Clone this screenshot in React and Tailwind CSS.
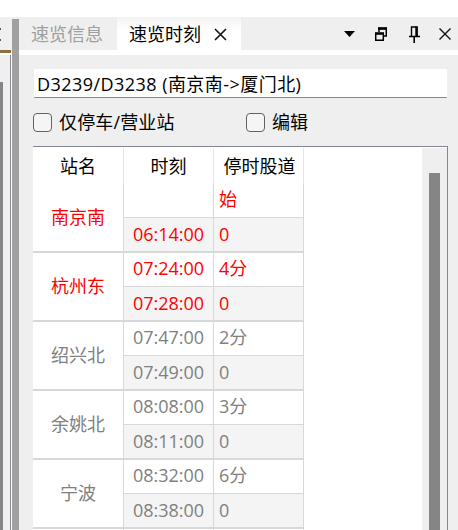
const stops = [
  { name: '南京南', arrive: '', stay: '始', depart: '06:14:00', major: true },
  { name: '杭州东', arrive: '07:24:00', stay: '4分', depart: '07:28:00', major: true },
  { name: '绍兴北', arrive: '07:47:00', stay: '2分', depart: '07:49:00' },
  { name: '余姚北', arrive: '08:08:00', stay: '3分', depart: '08:11:00' },
  { name: '宁波', arrive: '08:32:00', stay: '6分', depart: '08:38:00' },
];

function TabBar() {
  return (
    <div className="flex h-[33px] w-full bg-[#efefef]">
      <div className="flex h-[33px] w-[98px] items-center pl-3 text-[#a0a0a0]">速览信息</div>
      <div className="flex h-[33px] w-[124px] items-center bg-linear-to-b from-[#f3f3f3] to-white to-40% pl-3">
        <span>速览时刻</span>
        <svg className="mt-0.5 ml-[13px]" width="13" height="13" viewBox="0 0 13 13" fill="none" stroke="#111" strokeWidth="1.6">
          <path d="M1 1 12 12M12 1 1 12" />
        </svg>
      </div>
      <div className="ml-auto flex items-center pr-[7px]">
        <svg width="11" height="6" viewBox="0 0 11 6"><path d="M0 0H11L5.5 6Z" /></svg>
        <svg className="ml-5" width="12" height="14" viewBox="0 0 12 14" fill="none" stroke="#000">
          <path d="M4 5V1.5H11.3V9H9" strokeWidth="1.5" />
          <path d="M3 1.5H12" strokeWidth="2.6" />
          <path d="M.7 6V13.2H8.3V6" strokeWidth="1.5" />
          <path d="M0 6.5H9" strokeWidth="2.6" />
        </svg>
        <svg className="mt-0.5 ml-[22px]" width="11" height="17" viewBox="0 0 11 17" fill="none" stroke="#000">
          <path d="M2.5 10V1H8V10" strokeWidth="1.4" />
          <path d="M7.5 .5V10" strokeWidth="2.4" />
          <path d="M0 10.5H11M5.2 11V17" strokeWidth="1.6" />
        </svg>
        <svg className="ml-[19px]" width="12" height="12" viewBox="0 0 12 12" fill="none" stroke="#111" strokeWidth="1.4">
          <path d="M.5 .5 11.5 11.5M11.5 .5 .5 11.5" />
        </svg>
      </div>
    </div>
  );
}

function Check({ label, className }) {
  return (
    <label className={'flex items-center gap-[7px] ' + className}>
      <span className="size-[19px] rounded-[4px] border border-[#626262] bg-[#f5f5f5]" />
      <span>{label}</span>
    </label>
  );
}

function Stop({ stop }) {
  return (
    <div className={'flex h-[69px] w-[271px] shrink-0 border-b-2 border-[#d8d8d8] ' + (stop.major ? 'text-[#ff0000]' : 'text-[#808080]')}>
      <div className="flex w-[91px] items-center justify-center border-r border-[#d8d8d8] pb-0.5">{stop.name}</div>
      <div className="w-[90px] border-r border-[#d8d8d8]">
        <div className="flex h-[34px] items-center justify-center border-b border-[#d8d8d8] pb-[3px]">{stop.arrive}</div>
        <div className="flex h-[33px] items-center justify-center bg-[#f4f4f4] pb-0.5">{stop.depart}</div>
      </div>
      <div className="w-[90px] border-r border-[#d8d8d8]">
        <div className="flex h-[34px] items-center border-b border-[#d8d8d8] pb-[3px] pl-[5px]">{stop.stay}</div>
        <div className="flex h-[33px] items-center bg-[#f4f4f4] pb-0.5 pl-[5px]">0</div>
      </div>
    </div>
  );
}

export default function App() {
  return (
    <div className="flex h-[530px] w-[458px] flex-col overflow-hidden bg-white pt-[17px] font-['Open_Sans','Noto_Sans_CJK_SC',sans-serif] text-[18px] leading-[24px] font-[370] whitespace-nowrap text-black">
      <div className="flex h-[513px]">
        <div className="flex w-3 shrink-0 flex-col bg-[#efefef]">
          <div className="h-[33px] pt-[11px]">
            <div className="h-[2px] w-px bg-[#555]" />
            <div className="mt-[9px] h-[2px] w-px bg-[#555]" />
          </div>
          <div className="h-[3px] w-[11px] bg-[#8c6f3e]" />
          <div className="h-[2px] bg-white" />
          <div className="flex flex-1">
            <div className="mt-[27px] w-[3px] bg-[#858585]" />
            <div className="ml-[7px] w-px bg-[#828790]" />
            <div className="w-px bg-white" />
          </div>
        </div>
        <div className="w-[7px] shrink-0 border-t-2 border-[#efefef] bg-[#a0a0a0]" />
        <div className="flex w-[439px] flex-col">
          <TabBar />
          <div className="mt-[5px] flex flex-1 flex-col bg-[#efefef] pt-[14px] pl-[14px]">
            <div className="ml-px flex h-[29px] w-[413px] items-center rounded-[1px] border-b border-[#868686] bg-white pt-0.5 pl-[3px] tracking-[0.45px]">
              D3239/D3238 (南京南-&gt;厦门北)
            </div>
            <div className="flex h-[48px] items-center">
              <Check label="仅停车/营业站" className="w-[213px] tracking-[0.15px]" />
              <Check label="编辑" className="" />
            </div>
            <div className="flex h-[384px] w-[415px] justify-between overflow-hidden border-t border-r border-[#828790] bg-white">
              <div className="flex w-[271px] flex-col">
                <div className="flex h-[37px] shrink-0 pt-px">
                  <div className="flex w-[91px] items-center justify-center border-r border-[#e5e5e5]">站名</div>
                  <div className="flex w-[90px] items-center justify-center border-r border-[#e5e5e5]">时刻</div>
                  <div className="flex w-[90px] items-center justify-center border-r border-[#e5e5e5] pl-0.5">停时股道</div>
                </div>
                {stops.map((stop) => <Stop key={stop.name} stop={stop} />)}
                <div className="flex h-3 shrink-0">
                  <div className="w-[91px] border-r border-[#d8d8d8]" />
                  <div className="w-[90px] border-r border-[#d8d8d8]" />
                  <div className="w-[90px] border-r border-[#d8d8d8]" />
                </div>
              </div>
              <div className="mt-px w-[25px] bg-[#efefef] pt-[25px] pl-[7px]">
                <div className="h-full w-[11px] bg-[#858585]" />
              </div>
            </div>
          </div>
        </div>
      </div>
    </div>
  );
}
